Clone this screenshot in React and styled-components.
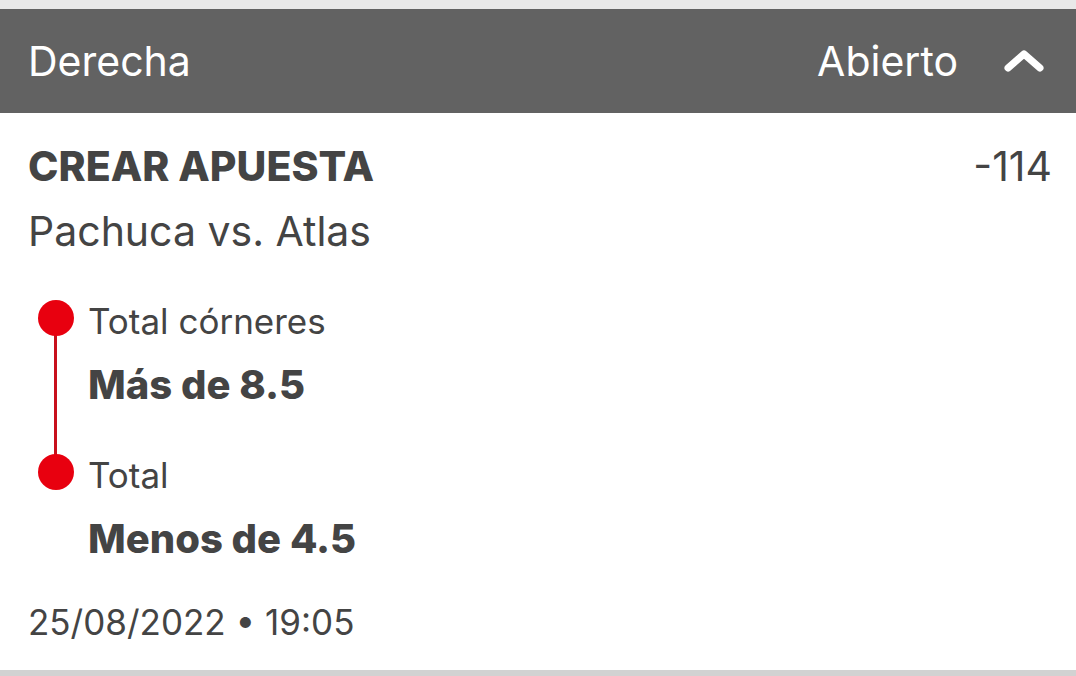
import styled, { createGlobalStyle } from "styled-components";

const GlobalStyle = createGlobalStyle`
  html, body {
    margin: 0;
    padding: 0;
    background: #e9e9e9;
  }
  body {
    font-family: Inter, "Noto Sans", sans-serif;
  }
`;

const Page = styled.div`
  width: 1076px;
  height: 676px;
  padding-top: 9px;
  box-sizing: border-box;
  overflow: hidden;
`;

const Header = styled.div`
  height: 104px;
  background: #626262;
  display: flex;
  align-items: center;
  justify-content: space-between;
  padding: 0 32px 0 28px;
  color: #fff;
  font-size: 41px;
`;

const Status = styled.div`
  display: flex;
  align-items: center;
  gap: 46px;
`;

const Body = styled.div`
  background: #fff;
  padding: 29px 24px 0 28px;
  height: 563px;
  box-sizing: border-box;
  border-bottom: 6px solid #d2d2d2;
  color: #444;
`;

const TitleRow = styled.div`
  display: flex;
  justify-content: space-between;
  align-items: baseline;
  line-height: 48px;
`;

const Title = styled.div`
  font-weight: 800;
  font-size: 41px;
`;

const Odds = styled.div`
  font-size: 41px;
`;

const Match = styled.div`
  font-size: 41px;
  line-height: 48px;
  margin-top: 17px;
`;

const Legs = styled.div`
  margin-top: 41px;
  display: flex;
  flex-direction: column;
  gap: 40px;
`;

const Leg = styled.div`
  position: relative;
  padding-left: 60px;
  &::before {
    content: "";
    position: absolute;
    left: 10px;
    top: 4px;
    width: 36px;
    height: 36px;
    border-radius: 50%;
    background: #e8000f;
    z-index: 1;
  }
  &::after {
    content: "";
    display: ${(p) => (p.last ? "none" : "block")};
    position: absolute;
    left: 26px;
    top: 22px;
    height: 154px;
    width: 3px;
    background: #c8101c;
  }
`;

const Market = styled.div`
  font-size: 35px;
  line-height: 50px;
`;

const Selection = styled.div`
  font-weight: 800;
  font-size: 40px;
  line-height: 50px;
  margin-top: 14px;
`;

const DateLine = styled.div`
  margin-top: 33px;
  font-size: 35px;
  line-height: 50px;
`;

const Chevron = () => (
  <svg width="40" height="24" viewBox="0 0 40 24">
    <path
      d="M4 19 L20 5 L36 19"
      fill="none"
      stroke="#fff"
      strokeWidth="7"
      strokeLinecap="round"
      strokeLinejoin="round"
    />
  </svg>
);

export default function App() {
  return (
    <Page>
      <GlobalStyle />
      <Header>
        <span>Derecha</span>
        <Status>
          <span>Abierto</span>
          <Chevron />
        </Status>
      </Header>
      <Body>
        <TitleRow>
          <Title>CREAR APUESTA</Title>
          <Odds>-114</Odds>
        </TitleRow>
        <Match>Pachuca vs. Atlas</Match>
        <Legs>
          <Leg>
            <Market>Total córneres</Market>
            <Selection>Más de 8.5</Selection>
          </Leg>
          <Leg last>
            <Market>Total</Market>
            <Selection>Menos de 4.5</Selection>
          </Leg>
        </Legs>
        <DateLine>25/08/2022 • 19:05</DateLine>
      </Body>
    </Page>
  );
}
